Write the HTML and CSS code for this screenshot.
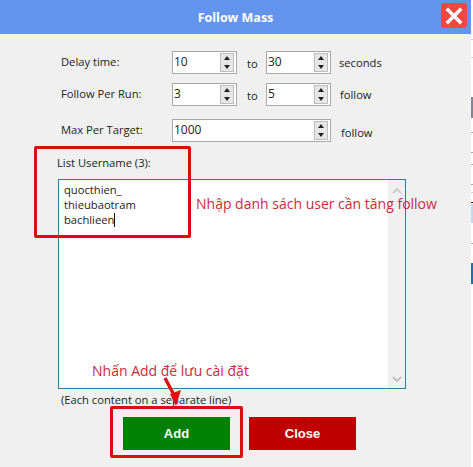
FILE: index.html
```html
<!DOCTYPE html>
<html lang="vi">
<head>
  <meta charset="UTF-8">
  <title>Follow Mass</title>
  <link rel="stylesheet" href="styles.css">
</head>
<body>
  <div class="window">
    <div class="titlebar">
      <div class="title">Follow Mass</div>
      <button class="close-x">
        <svg width="18" height="18" viewBox="0 0 18 18"><path d="M3 3 L15 15 M15 3 L3 15" stroke="#fff" stroke-width="3.4" stroke-linecap="square" fill="none"/></svg>
      </button>
    </div>

    <div class="content">
      <div class="row row-delay">
        <div class="label">Delay time:</div>
        <div class="spin"><span class="val">10</span><span class="arrows"><i class="up"></i><i class="down"></i></span></div>
        <div class="to">to</div>
        <div class="spin"><span class="val">30</span><span class="arrows"><i class="up"></i><i class="down"></i></span></div>
        <div class="unit">seconds</div>
      </div>
      <div class="row row-run">
        <div class="label">Follow Per Run:</div>
        <div class="spin"><span class="val">3</span><span class="arrows"><i class="up"></i><i class="down"></i></span></div>
        <div class="to">to</div>
        <div class="spin"><span class="val">5</span><span class="arrows"><i class="up"></i><i class="down"></i></span></div>
        <div class="unit">follow</div>
      </div>
      <div class="row row-max">
        <div class="label">Max Per Target:</div>
        <div class="spin spin-wide"><span class="val">1000</span><span class="arrows"><i class="up"></i><i class="down"></i></span></div>
        <div class="unit unit-max">follow</div>
      </div>

      <div class="list-label">List Username (3):</div>
      <div class="list-box">
        <div class="list-text">quocthien_<br>thieubaotram<br>bachlieen<span class="caret"></span></div>
        <div class="scroll">
          <svg width="10" height="6" viewBox="0 0 10 6"><path d="M1 5 L5 1 L9 5" stroke="#c4c4c4" stroke-width="1.6" fill="none"/></svg>
          <svg width="10" height="6" viewBox="0 0 10 6"><path d="M1 1 L5 5 L9 1" stroke="#b4b4b4" stroke-width="1.6" fill="none"/></svg>
        </div>
      </div>
      <div class="hint">(Each content on a separate line)</div>

      <div class="actions">
        <button class="btn btn-add">Add</button>
        <button class="btn btn-close">Close</button>
      </div>
    </div>
  </div>

  <div class="side-marks">
    <i class="mark m1"></i><i class="mark m2"></i><i class="mark m3"></i><i class="mark m4"></i>
    <i class="mark m5"></i><i class="mark m6"></i><i class="mark m7"></i><i class="mark m8"></i>
    <i class="mark m9"></i><i class="mark m10"></i><i class="mark m11"></i><i class="mark m12"></i>
  </div>

  <!-- red annotations drawn on top of the screenshot -->
  <div class="box box-list"></div>
  <div class="box box-add"></div>
  <div class="note note-list">Nhập danh sách user cần tăng follow</div>
  <div class="note note-add">Nhấn Add để lưu cài đặt</div>
  <svg class="arrow" width="24" height="34" viewBox="0 0 24 34"><path d="M2 1 L11 18" stroke="#e01010" stroke-width="3.4" fill="none"/><path d="M7 17 L18 13 L13 29 Z" fill="#e01010"/></svg>
</body>
</html>
```

FILE: styles.css
```css
* {
  box-sizing: border-box;
}
body {
  margin: 0;
  width: 473px;
  height: 467px;
  position: relative;
  overflow: hidden;
  background: #fff;
  font-family: 'Open Sans', 'Noto Sans', sans-serif;
  font-size: 11.2px;
  color: #222;
}
.window {
  width: 471px;
  height: 467px;
  background: #f0f0f0;
}
.titlebar {
  height: 34px;
  background: #6495ed;
  display: flex;
  align-items: center;
  justify-content: center;
  position: relative;
}
.title {
  color: #fff;
  font-family: 'Open Sans', sans-serif;
  font-weight: 700;
  font-size: 12.5px;
}
.close-x {
  position: absolute;
  left: 441px;
  top: 3px;
  width: 26px;
  height: 25px;
  padding: 0;
  border: none;
  border-radius: 3px;
  background: #f04840;
  display: flex;
  align-items: center;
  justify-content: center;
}
.content {
  padding: 17px 0 0 61px;
}
.row {
  display: flex;
  align-items: center;
  height: 23px;
  margin-bottom: 9px;
}
.row-run {
  margin-bottom: 13px;
}
.label {
  width: 111px;
  margin-top: -2px;
}
.spin {
  width: 65px;
  height: 23px;
  background: #fff;
  border: 1px solid #a9a9a9;
  display: flex;
  align-items: center;
  justify-content: space-between;
  padding: 0 1px;
  font-size: 12px;
}
.spin-wide {
  width: 159px;
}
.val {
  margin-top: -2px;
}
.arrows {
  width: 14px;
  height: 19px;
  background: #e6e6e6;
  border: 1px solid #bdbdbd;
  display: flex;
  flex-direction: column;
  align-items: center;
  justify-content: space-around;
  margin-right: 1px;
}
.up {
  border: 3px solid transparent;
  border-top: none;
  border-bottom: 4px solid #222;
}
.down {
  border: 3px solid transparent;
  border-bottom: none;
  border-top: 4px solid #222;
}
.to {
  width: 29px;
  padding-left: 10px;
  margin-top: 1px;
}
.unit {
  margin-left: 8px;
}
.row-run .unit {
  margin-left: 9px;
}
.unit-max {
  margin-left: 10px;
  margin-top: 3px;
}
.list-label {
  margin: 13px 0 8px -4px;
  line-height: 16px;
}
.list-box {
  margin-left: -3px;
  width: 348px;
  height: 210px;
  background: #fff;
  border: 1px solid #2a7fa8;
  display: flex;
  justify-content: space-between;
}
.list-text {
  padding: 2px 0 0 5px;
  line-height: 15px;
  font-size: 11.2px;
}
.caret {
  display: inline-block;
  width: 1px;
  height: 14px;
  background: #111;
  vertical-align: -3px;
}
.scroll {
  width: 17px;
  background: #f0f0f0;
  display: flex;
  flex-direction: column;
  align-items: center;
  justify-content: space-between;
  padding: 8px 0 6px;
}
.hint {
  margin-top: 3px;
  line-height: 16px;
}
.actions {
  display: flex;
  gap: 19px;
  margin: 9px 0 0 62px;
}
.btn {
  width: 107px;
  height: 33px;
  border: none;
  color: #fff;
  font-family: 'Liberation Sans', sans-serif;
  font-weight: 700;
  font-size: 13px;
}
.btn-add {
  background: #008000;
}
.btn-close {
  background: #c00000;
}
.side-marks {
  position: absolute;
  left: 471px;
  top: 0;
  width: 2px;
  height: 467px;
}
.mark {
  position: absolute;
  left: 0;
  width: 2px;
  height: 1px;
  background: #a8a8a8;
}
.m1 { top: 39px; background: #d0d0d0; }
.m2 { top: 57px; background: #d0d0d0; }
.m3 { top: 97px; height: 21px; background: #85858f; }
.m4 { top: 132px; }
.m5 { top: 152px; }
.m6 { top: 164px; }
.m7 { top: 184px; }
.m8 { top: 192px; background: #d0d0d0; }
.m9 { top: 202px; background: #111; }
.m10 { top: 204px; height: 19px; background: #c4d8ea; }
.m11 { top: 243px; }
.m12 { top: 263px; height: 21px; background: #1e6fb0; }
.box {
  position: absolute;
  border: 3px solid #e00c0c;
  border-radius: 2px;
}
.box-list {
  left: 34px;
  top: 146px;
  width: 157px;
  height: 92px;
}
.box-add {
  left: 110px;
  top: 406px;
  width: 133px;
  height: 52px;
}
.note {
  position: absolute;
  color: #cb2a3a;
  font-size: 14px;
  white-space: nowrap;
}
.note-list {
  left: 196px;
  top: 194px;
}
.note-add {
  left: 92px;
  top: 361px;
}
.arrow {
  position: absolute;
  left: 163px;
  top: 377px;
}
```
